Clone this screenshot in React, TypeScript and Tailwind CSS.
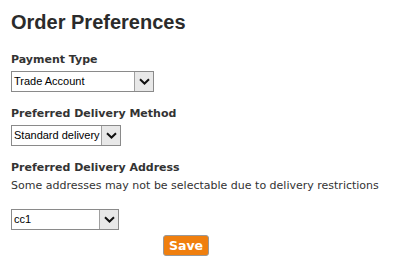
import React from 'react';

const Arrow = () => (
  <svg width="11" height="7" viewBox="0 0 11 7" className="block">
    <path d="M1 1.2 L5.5 5.5 L10 1.2" fill="none" stroke="#111" strokeWidth="2" />
  </svg>
);

const FakeSelect: React.FC<{ value: string; width: string }> = ({ value, width }) => (
  <div className={`flex h-[21px] ${width} border border-[#8a8a8a] bg-white`}>
    <div className="flex-1 pl-[2px] text-[11px] leading-[19px] text-black font-['Liberation_Sans',Arial,sans-serif] whitespace-nowrap overflow-hidden">
      {value}
    </div>
    <div className="flex w-[19px] items-center justify-center border-l border-[#a0a0a0] bg-[#e8e8e8]">
      <Arrow />
    </div>
  </div>
);

export default function App() {
  return (
    <div className="w-[393px] h-[274px] bg-white px-[11px] pt-[10px] text-[#333] font-['DejaVu_Sans',Verdana,sans-serif]">
      <h1 className="text-[20px] leading-[24px] font-bold text-[#2b2b2b] font-['Liberation_Sans',Arial,sans-serif]">
        Order Preferences
      </h1>

      <div className="mt-[19px] text-[11px] leading-[14px] font-bold">Payment Type</div>
      <div className="mt-[4px]">
        <FakeSelect value="Trade Account" width="w-[143px]" />
      </div>

      <div className="mt-[15px] text-[11px] leading-[14px] font-bold">Preferred Delivery Method</div>
      <div className="mt-[4px]">
        <FakeSelect value="Standard delivery" width="w-[110px]" />
      </div>

      <div className="mt-[15px] text-[11px] leading-[14px] font-bold">Preferred Delivery Address</div>
      <div className="mt-[4px] text-[11px] leading-[14px]">
        Some addresses may not be selectable due to delivery restrictions
      </div>
      <div className="mt-[16px]">
        <FakeSelect value="cc1" width="w-[108px]" />
      </div>

      <div className="mt-[5px] flex justify-center pr-[21px]">
        <button className="h-[21px] rounded-[3px] border border-[#999] bg-[#f07f0e] px-[5px] text-[12.5px] font-bold leading-[19px] text-white font-['DejaVu_Sans',Verdana,sans-serif]">
          Save
        </button>
      </div>
    </div>
  );
}
